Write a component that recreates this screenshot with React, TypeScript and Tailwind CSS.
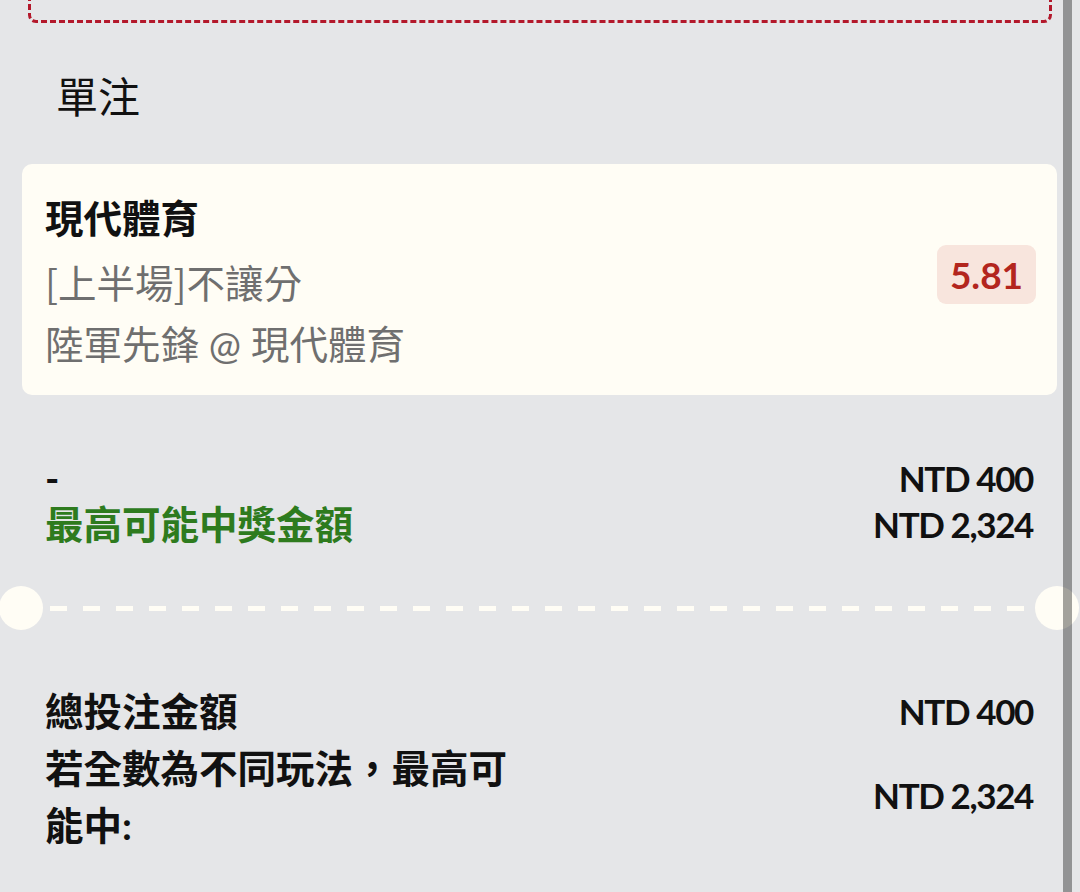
import React from "react";

const font = "font-['Lato','Noto_Sans_CJK_TC',sans-serif]";

const Divider = () => (
  <div className="relative mt-[39px] flex h-[44px] items-center">
    <div className="absolute left-[-1px] top-0 h-[44px] w-[44px] rounded-full bg-[#fffdf5]" />
    <div className="mx-[50px] h-[5px] flex-1 bg-[repeating-linear-gradient(to_right,#fffdf5_0_17px,transparent_17px_33px)]" />
    <div className="absolute right-[1px] top-0 h-[44px] w-[44px] rounded-full bg-[#fffdf5]" />
  </div>
);

const App = () => {
  return (
    <div className={`relative h-[892px] w-[1080px] overflow-hidden bg-[#e5e6e8] text-[#111] ${font}`}>
      {/* previous bet box, cut off by the top edge */}
      <div className="mx-[28px] -mt-[37px] h-[60px] rounded-b-[8px] border-[3px] border-dashed border-[#b3182b]" />

      <div className="mt-[44px] pl-[56px] text-[42px] leading-[60px]">單注</div>

      {/* selection card */}
      <div className="ml-[22px] mr-[23px] mt-[37px] flex items-start justify-between rounded-[10px] bg-[#fffdf5] pb-[19px] pl-[23px] pr-[21px] pt-[23px]">
        <div className="text-[38.5px] leading-[63px]">
          <div className="font-bold">現代體育</div>
          <div className="font-['Noto_Sans_CJK_TC',sans-serif] text-[#6f6f6f]">[上半場]不讓分</div>
          <div className="text-[#6f6f6f]">陸軍先鋒 @ 現代體育</div>
        </div>
        <div className="mt-[58px] flex h-[59px] w-[99px] items-center justify-center rounded-[9px] bg-[#f8e5dd] text-[37px] font-bold text-[#b3261e]">
          5.81
        </div>
      </div>

      {/* stake & payout */}
      <div className="mt-[60px] flex justify-between pl-[45px] pr-[47px]">
        <div className="text-[38.5px] font-bold leading-[46px]">
          <div>-</div>
          <div className="text-[#2e7b1e]">最高可能中獎金額</div>
        </div>
        <div className="text-right text-[35px] font-bold leading-[46px] tracking-[-1.4px]">
          <div>NTD 400</div>
          <div>NTD 2,324</div>
        </div>
      </div>

      <Divider />

      {/* totals */}
      <div className="mt-[53px] flex flex-col pl-[45px] pr-[47px]">
        <div className="flex items-center justify-between">
          <div className="text-[38.5px] font-bold leading-[57px]">總投注金額</div>
          <div className="text-[35px] font-bold leading-[57px] tracking-[-1.4px]">NTD 400</div>
        </div>
        <div className="flex items-center justify-between">
          <div className="max-w-[485px] text-[38.5px] font-bold leading-[57px]">若全數為不同玩法，最高可能中:</div>
          <div className="-mt-[4px] text-[35px] font-bold leading-[57px] tracking-[-1.4px]">NTD 2,324</div>
        </div>
      </div>

      {/* scrollbar overlay */}
      <div className="absolute bottom-0 right-[8px] top-0 w-[9px] bg-[rgba(0,0,0,0.36)]" />
    </div>
  );
};

export default App;
